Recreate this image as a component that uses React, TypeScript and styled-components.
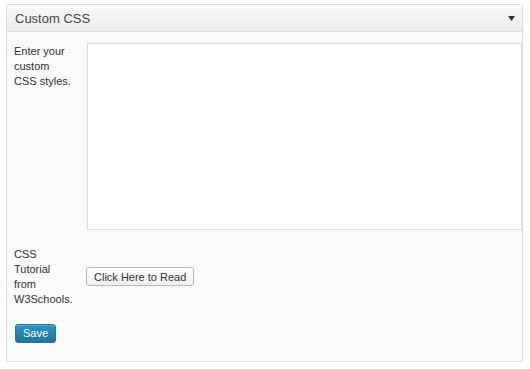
import styled, { createGlobalStyle } from 'styled-components';

const Global = createGlobalStyle`
  html, body {
    margin: 0;
    padding: 0;
    background: #fff;
  }
  body {
    font-family: "Liberation Sans", Arial, sans-serif;
    color: #333;
  }
`;

export default function App() {
  return (
    <>
      <Global />
      <Page>
        <Box>
          <Header>
            <Title>Custom CSS</Title>
            <Toggle>
              <svg width="7" height="5" viewBox="0 0 7 5">
                <path d="M0 0 H7 L3.5 5 Z" fill="#333" />
              </svg>
            </Toggle>
          </Header>
          <Body>
            <Row>
              <Label>Enter your custom CSS styles.</Label>
              <Editor spellCheck={false} />
            </Row>
            <Row $center $gap={16}>
              <Label>CSS Tutorial from W3Schools.</Label>
              <div>
                <ReadButton type="button">Click Here to Read</ReadButton>
              </div>
            </Row>
            <Footer>
              <SaveButton type="button">Save</SaveButton>
            </Footer>
          </Body>
        </Box>
      </Page>
    </>
  );
}

const Page = styled.div`
  padding: 4px 0 0 6px;
  width: 530px;
  box-sizing: border-box;
`;

const Box = styled.div`
  width: 517px;
  box-sizing: border-box;
  border: 1px solid #dcdcdc;
  border-radius: 2px;
  background: #fafafa;
  box-shadow: 0 1px 1px rgba(0, 0, 0, 0.04);
`;

const Header = styled.div`
  display: flex;
  align-items: center;
  justify-content: space-between;
  height: 26px;
  padding: 0 7px 0 8px;
  border-bottom: 1px solid #dcdcdc;
  background: linear-gradient(to bottom, #f9f9f9, #ececec);
`;

const Title = styled.div`
  font-size: 13px;
  color: #464646;
`;

const Toggle = styled.div`
  display: flex;
  align-items: center;
  padding-top: 1px;
`;

const Body = styled.div`
  padding: 11px 0 18px 7px;
`;

const Row = styled.div<{ $center?: boolean; $gap?: number }>`
  display: grid;
  grid-template-columns: 73px 1fr;
  align-items: ${(p) => (p.$center ? 'center' : 'start')};
  margin-top: ${(p) => p.$gap ?? 0}px;
`;

const Label = styled.div`
  font-size: 11px;
  line-height: 15px;
  color: #333;
  padding-top: 1px;
  padding-right: 14px;
`;

const Editor = styled.textarea`
  display: block;
  width: 100%;
  height: 187px;
  box-sizing: border-box;
  margin: 0;
  border: 1px solid #dfdfdf;
  border-right-color: #dcdcdc;
  background: #fff;
  resize: none;
  outline: none;
`;

const ReadButton = styled.button`
  height: 19px;
  padding: 0 7px;
  margin-left: -1px;
  font-family: "Liberation Sans", Arial, sans-serif;
  font-size: 11px;
  color: #333;
  border: 1px solid #bbb;
  border-radius: 3px;
  background: linear-gradient(to bottom, #fefefe, #f0f0f0);
  cursor: pointer;
`;

const Footer = styled.div`
  margin-top: 16px;
  padding-left: 1px;
`;

const SaveButton = styled.button`
  width: 41px;
  height: 19px;
  padding: 0;
  font-family: "Liberation Sans", Arial, sans-serif;
  font-size: 11px;
  color: #fff;
  border: 1px solid #21759b;
  border-radius: 3px;
  background: linear-gradient(to bottom, #2a95c5, #21759b);
  box-shadow: inset 0 1px 0 rgba(120, 200, 230, 0.5);
  cursor: pointer;
`;
